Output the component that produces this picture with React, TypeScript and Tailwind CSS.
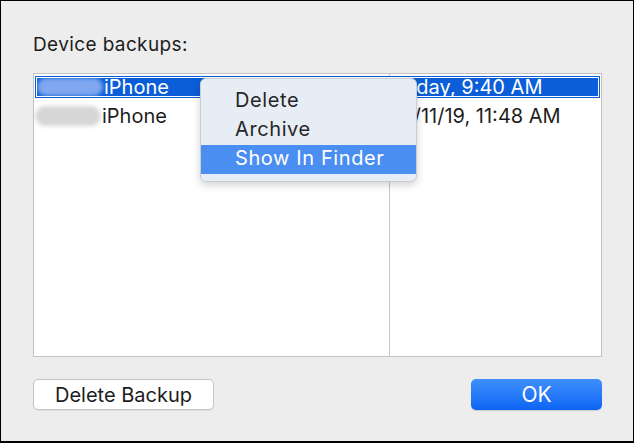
import React from 'react'

const font = { fontFamily: 'Inter, "Noto Sans", "Liberation Sans", sans-serif' }

export default function App() {
  return (
    <div
      style={font}
      className="relative w-[634px] h-[443px] bg-[#ededed] border border-b-2 border-black flex flex-col pl-[32px] pr-[31px] pt-[33px] text-[20px] leading-[22px] text-[#1d1d1d] overflow-hidden"
    >
      <div className="text-[19px] tracking-[0.02em]">Device backups:</div>

      {/* table */}
      <div className="mt-[17px] h-[284px] bg-white border border-[#c3c3c3] flex flex-col">
        <div className="grid grid-cols-[355px_1fr] h-[2px]">
          <div />
          <div className="border-l border-[#c8c8c8]" />
        </div>

        {/* selected row */}
        <div className="mx-[1px] h-[22px] border border-[#0b5ed7] flex">
          <div className="flex-1 border border-white bg-[#0b5ed7] grid grid-cols-[353px_1fr] text-white leading-[18px] overflow-hidden">
            <div className="flex items-center">
              <div className="w-[66px] h-[18px] rounded-full bg-[#80a8f0] blur-[2px]" />
              <span className="ml-[1px]">iPhone</span>
            </div>
            <div className="pl-[3px] whitespace-nowrap">Today, 9:40 AM</div>
          </div>
        </div>

        {/* second row */}
        <div className="grid grid-cols-[355px_1fr] h-[29px]">
          <div className="flex items-center pt-[7px]">
            <div className="ml-[1px] w-[66px] h-[20px] rounded-full bg-[#d6d6d6] blur-[2px]" />
            <span className="ml-[1px]">iPhone</span>
          </div>
          <div className="border-l border-[#c8c8c8] pl-[3px] pt-[7px] whitespace-nowrap">10/11/19, 11:48 AM</div>
        </div>

        <div className="flex-1 grid grid-cols-[355px_1fr]">
          <div />
          <div className="border-l border-[#c8c8c8]" />
        </div>
      </div>

      {/* buttons */}
      <div className="mt-[22px] flex justify-between">
        <button className="w-[181px] h-[31px] rounded-[5px] bg-white border border-[#c4c4c4] shadow-[0_1px_0_rgba(0,0,0,0.05)] text-[20px] text-[#1d1d1d]">
          Delete Backup
        </button>
        <button className="w-[131px] h-[31px] rounded-[5px] bg-gradient-to-b from-[#3f8ffb] to-[#0b64f4] text-white text-[21px] shadow-[0_1px_1px_rgba(0,0,0,0.15)]">
          OK
        </button>
      </div>

      {/* context menu */}
      <div className="absolute left-[199px] top-[77px] w-[217px] rounded-[6px] bg-[#e7edf5] border border-[#c9cdd3] shadow-[0_3px_8px_rgba(0,0,0,0.18)] pt-[8px] pb-[7px] text-[#262626] tracking-[0.03em]">
        <div className="h-[29px] leading-[27px] pl-[34px]">Delete</div>
        <div className="h-[29px] leading-[27px] pl-[34px]">Archive</div>
        <div className="h-[29px] leading-[27px] pl-[34px] bg-[#4b8ef2] text-white">Show In Finder</div>
      </div>
    </div>
  )
}
